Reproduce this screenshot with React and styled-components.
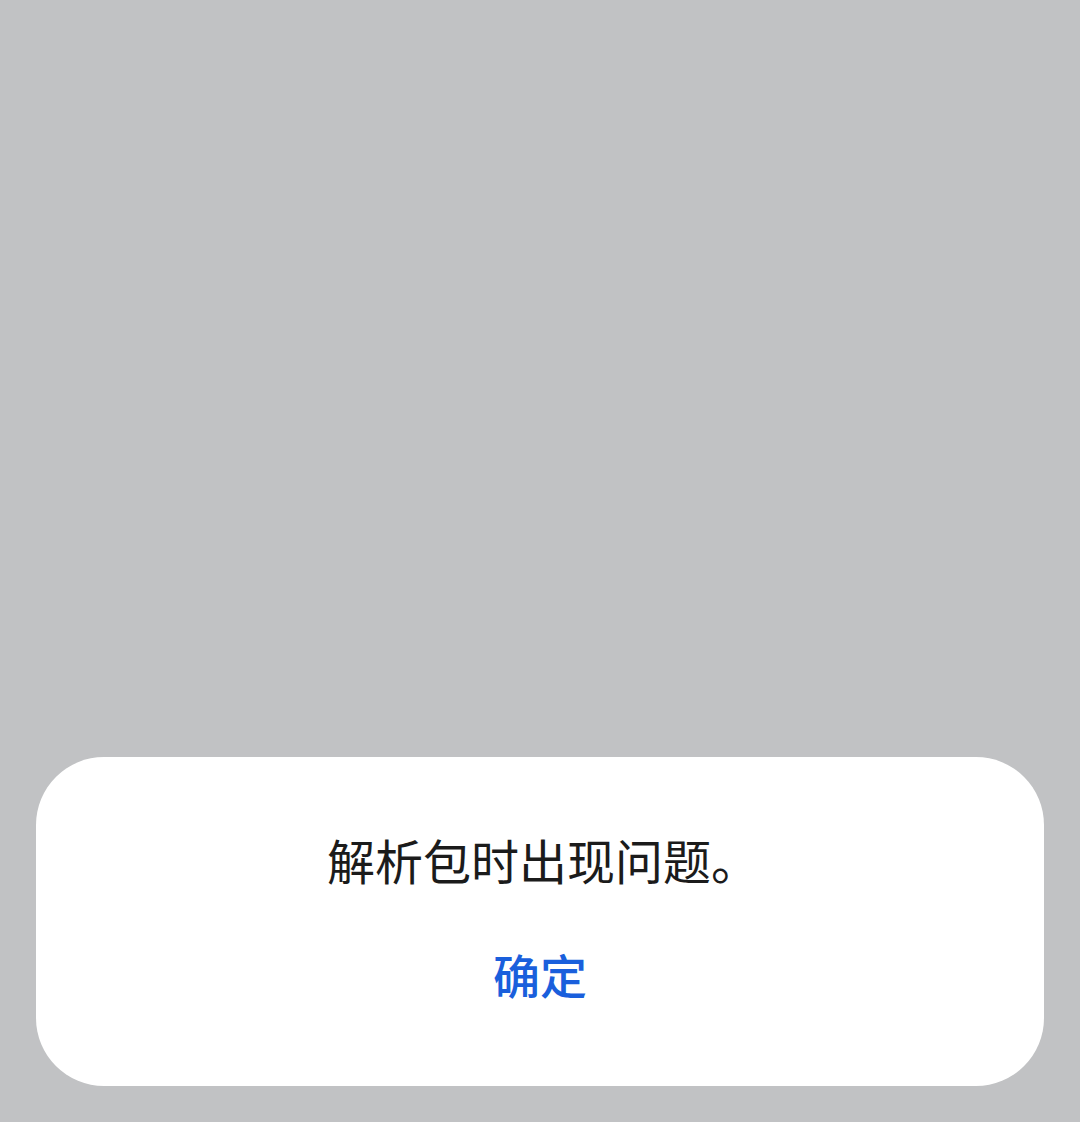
import styled, { createGlobalStyle } from "styled-components";

const Global = createGlobalStyle`
  html, body {
    margin: 0;
    padding: 0;
    background: #c1c2c4;
  }
  body {
    font-family: "Noto Sans CJK SC", "Noto Sans", sans-serif;
  }
`;

const Screen = styled.div`
  height: 1122px;
  display: flex;
  flex-direction: column;
  justify-content: flex-end;
  padding: 0 36px 36px;
  box-sizing: border-box;
  background: #c1c2c4;
`;

const Dialog = styled.div`
  background: #ffffff;
  border-radius: 68px;
  height: 329px;
  box-sizing: border-box;
  padding: 72px 0 0;
  display: flex;
  flex-direction: column;
  align-items: center;
  gap: 55px;
`;

const Message = styled.div`
  font-size: 48px;
  line-height: 60px;
  color: #1b1b1b;
  text-align: center;
  padding-left: 6px;
`;

const Button = styled.button`
  border: none;
  background: none;
  padding: 0;
  font-family: inherit;
  font-size: 47px;
  line-height: 60px;
  font-weight: 500;
  color: #1a5fdc;
  cursor: pointer;
`;

export default function App() {
  return (
    <>
      <Global />
      <Screen>
        <Dialog>
          <Message>解析包时出现问题。</Message>
          <Button>确定</Button>
        </Dialog>
      </Screen>
    </>
  );
}
